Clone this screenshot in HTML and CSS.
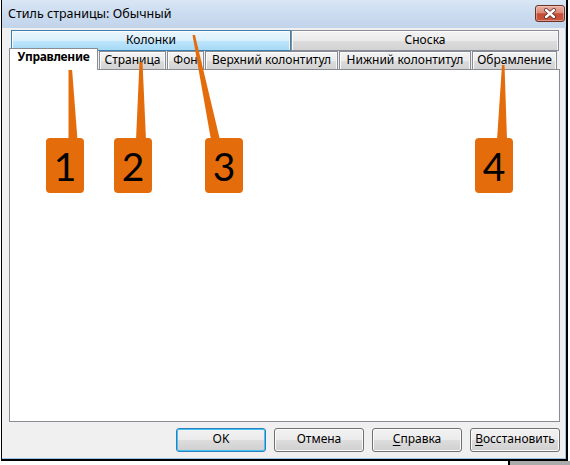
FILE: index.html
```html
<!DOCTYPE html>
<html lang="ru">
<head>
<meta charset="utf-8">
<title>Стиль страницы</title>
<link rel="stylesheet" href="styles.css">
</head>
<body>
<div class="window">
  <div class="titlebar">
    <span class="title">Стиль страницы: Обычный</span>
    <div class="close">
      <svg width="28" height="15" viewBox="0 0 28 15">
        <path d="M10 4 L18 11 M18 4 L10 11" stroke="#5a2a22" stroke-width="4" stroke-linecap="round"/>
        <path d="M10 4 L18 11 M18 4 L10 11" stroke="#ffffff" stroke-width="2.4" stroke-linecap="round"/>
      </svg>
    </div>
  </div>
  <div class="client">
    <div class="tabs">
      <div class="row row-back">
        <div class="tab tab-hover w-kol">Колонки</div>
        <div class="tab w-sn">Сноска</div>
      </div>
      <div class="row row-front">
        <div class="tab tab-selected">Управление</div>
        <div class="tab w-str">Страница</div>
        <div class="tab w-fon">Фон</div>
        <div class="tab w-top">Верхний колонтитул</div>
        <div class="tab w-bot">Нижний колонтитул</div>
        <div class="tab w-obr">Обрамление</div>
      </div>
    </div>
    <div class="panel"></div>
    <div class="buttons">
      <div class="btn btn-default">OK</div>
      <div class="btn">Отмена</div>
      <div class="btn"><u>С</u>правка</div>
      <div class="btn"><u>В</u>осстановить</div>
    </div>
  </div>
</div>
<div class="behind"></div>
<svg class="callouts" width="570" height="465" viewBox="0 0 570 465">
  <g fill="#e46c0a">
    <polygon points="68.5,62 71.5,62 77.5,140 68.5,140"/>
    <polygon points="139.5,62 142.5,62 146,140 136,140"/>
    <polygon points="192.5,35 195,35 220,140 211,140"/>
    <polygon points="502,65 504.5,65 507,140 497,140"/>
    <rect x="46" y="138" width="38" height="55" rx="4"/>
    <rect x="114" y="138" width="38" height="55" rx="4"/>
    <rect x="205" y="138" width="38" height="55" rx="4"/>
    <rect x="475" y="138" width="38" height="55" rx="4"/>
  </g>
  <g class="num" text-anchor="middle">
    <text x="65" y="181">1</text>
    <text x="133" y="181">2</text>
    <text x="224" y="181">3</text>
    <text x="494" y="181">4</text>
  </g>
</svg>
</body>
</html>
```

FILE: styles.css
```css
* {
  box-sizing: border-box;
  margin: 0;
  padding: 0;
}

html,
body {
  width: 570px;
  height: 465px;
  overflow: hidden;
  background: #ffffff;
}

body {
  position: relative;
  font-family: "Noto Sans", "Open Sans", sans-serif;
  font-size: 12px;
  line-height: 16px;
  color: #000000;
}

.window {
  margin-left: 1px;
  width: 567px;
  height: 461px;
  border-left: 1px solid #000000;
  border-right: 2px solid #000000;
  border-bottom: 2px solid #000000;
  background: #f0f0f0;
  box-shadow: inset -1px -1px 0 #9cc0e6;
  display: flex;
  flex-direction: column;
}

.titlebar {
  height: 28px;
  flex: none;
  display: flex;
  align-items: flex-start;
  padding-left: 6px;
  background: linear-gradient(#d9e6f5 0%, #cbdcf0 50%, #c2d4ea 100%);
}

.title {
  padding-top: 6px;
  font-size: 12.5px;
  white-space: nowrap;
}

.close {
  margin-left: auto;
  margin-right: 1px;
  margin-top: 5px;
  width: 30px;
  height: 17px;
  border: 1px solid #6a3328;
  border-radius: 3px;
  background: linear-gradient(#e9afa3 0%, #dc8a78 45%, #c54d36 52%, #c8573d 100%);
  box-shadow: inset 0 0 0 1px rgba(255, 220, 210, 0.45);
}

.close svg {
  display: block;
}

.client {
  flex: 1;
  display: flex;
  flex-direction: column;
  padding-top: 2px;
}

.tabs {
  margin-left: 9px;
  width: 548px;
}

.row {
  display: flex;
}

.row-back {
  height: 21px;
}

.row-front {
  height: 18px;
  gap: 1px;
  align-items: flex-start;
}

.tab {
  flex: none;
  height: 100%;
  border: 1px solid #898c95;
  text-align: center;
  white-space: nowrap;
  background: linear-gradient(#f3f3f3 0%, #ebebeb 50%, #dddddd 51%, #d2d2d2 100%);
  box-shadow: inset 1px 1px 0 #fcfcfc, inset -1px 0 0 #f6f6f6;
}

.row-back .tab {
  padding-top: 1px;
}

.row-front .tab {
  border-bottom: none;
  padding-top: 0;
}

.tab-hover {
  border-color: #3c7fb1;
  background: linear-gradient(#eaf6fd 0%, #d9f0fc 50%, #bee6fd 51%, #a7d9f5 100%);
}

.w-kol {
  width: 280px;
}

.w-sn {
  width: 268px;
}

.tab-selected {
  position: relative;
  z-index: 2;
  width: 89px;
  height: 22px;
  margin-top: -3px;
  margin-left: -2px;
  padding-top: 1px;
  font-weight: bold;
  letter-spacing: -0.3px;
  background: #ffffff;
  box-shadow: none;
}

.w-str {
  width: 67px;
}

.w-fon {
  width: 37px;
}

.w-top {
  width: 133px;
}

.w-bot {
  width: 132px;
}

.w-obr {
  width: 85px;
}

.panel {
  margin-left: 7px;
  width: 551px;
  height: 353px;
  flex: none;
  border: 1px solid #898c95;
  background: #ffffff;
}

.buttons {
  display: flex;
  justify-content: flex-end;
  gap: 8px;
  margin-top: 6px;
  padding-right: 6px;
}

.btn {
  width: 90px;
  height: 24px;
  display: flex;
  align-items: center;
  justify-content: center;
  padding-bottom: 2px;
  border: 1px solid #707070;
  border-radius: 3px;
  background: linear-gradient(#f2f2f2 0%, #ebebeb 50%, #dddddd 51%, #cfcfcf 100%);
  box-shadow: inset 0 0 0 1px #fbfbfb;
  white-space: nowrap;
}

.btn u {
  text-decoration: underline;
  text-underline-offset: 2px;
}

.btn-default {
  border-color: #2f7fbf;
  box-shadow: inset 0 0 0 1px #44c2f2;
}

.behind {
  position: absolute;
  left: 508px;
  top: 461px;
  width: 62px;
  height: 4px;
  border-left: 2px solid #000000;
  background: #ababab;
}

.callouts {
  position: absolute;
  left: 0;
  top: 0;
  pointer-events: none;
}

.num text {
  font-family: "Lato", "Open Sans", sans-serif;
  font-size: 39px;
  fill: #000000;
}
```
